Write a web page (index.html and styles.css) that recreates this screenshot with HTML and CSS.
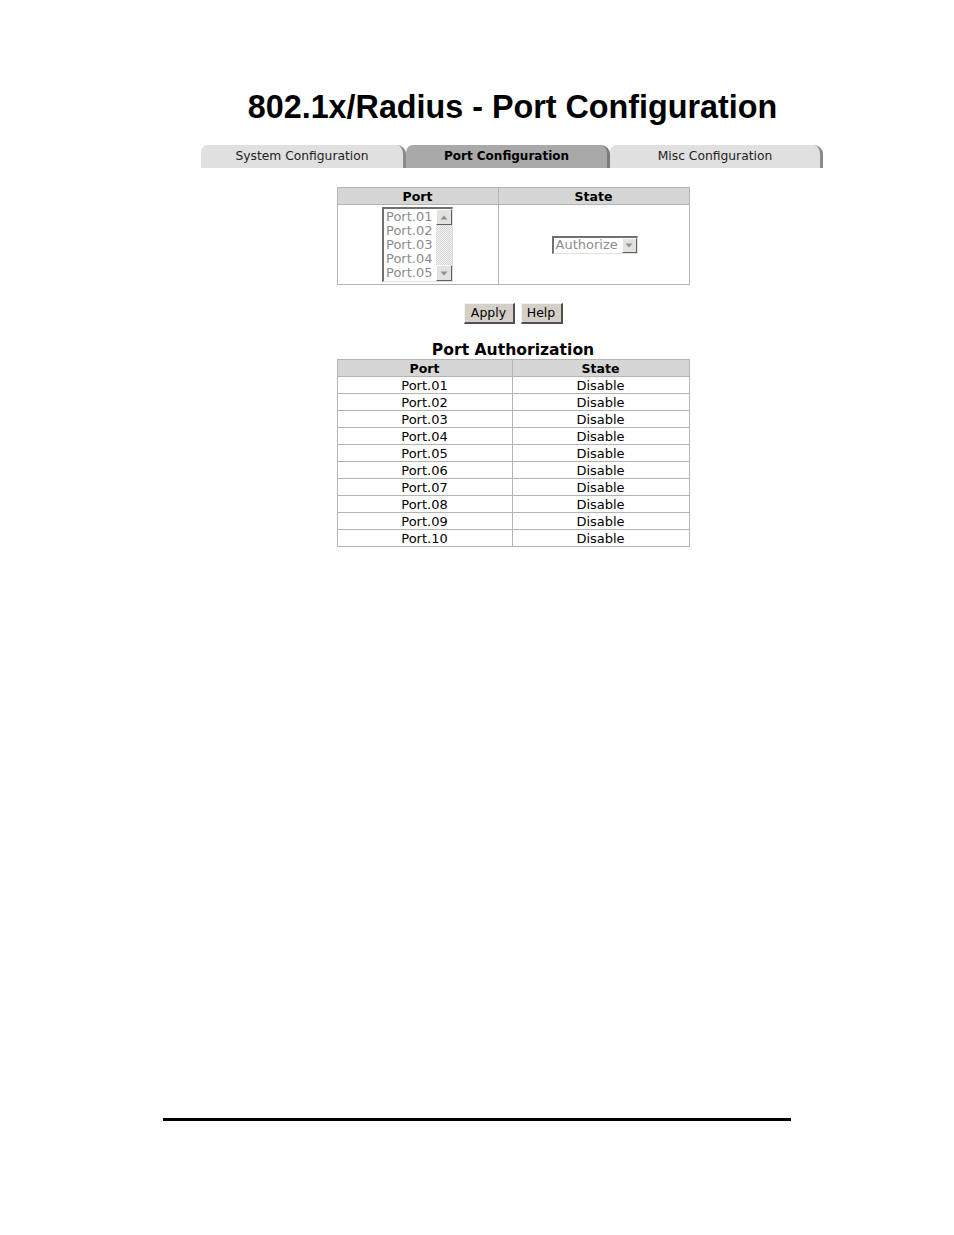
FILE: index.html
```html
<!DOCTYPE html>
<html>
<head>
<meta charset="utf-8">
<link rel="stylesheet" href="styles.css">
</head>
<body>
<div class="page">
  <h1 class="title">802.1x/Radius - Port Configuration</h1>
  <div class="tabs">
    <div class="tab tab1">System Configuration</div>
    <div class="tab tab2 active">Port Configuration</div>
    <div class="tab tab3">Misc Configuration</div>
  </div>

  <table class="cfg">
    <tr class="hdr"><th class="c1">Port</th><th>State</th></tr>
    <tr class="body">
      <td class="c1">
        <div class="listbox">
          <div class="items">
            <div>Port.01</div><div>Port.02</div><div>Port.03</div><div>Port.04</div><div>Port.05</div>
          </div>
          <div class="sbar">
            <div class="sbtn"><svg width="8" height="5" viewBox="0 0 8 5"><polygon points="4,0.5 7.5,4.5 0.5,4.5" fill="#909090"/></svg></div>
            <div class="track"></div>
            <div class="sbtn"><svg width="8" height="5" viewBox="0 0 8 5"><polygon points="0.5,0.5 7.5,0.5 4,4.5" fill="#909090"/></svg></div>
          </div>
        </div>
      </td>
      <td>
        <div class="select">
          <span class="sel-text">Authorize</span>
          <span class="sel-btn"><svg width="8" height="5" viewBox="0 0 8 5"><polygon points="0.5,0.5 7.5,0.5 4,4.5" fill="#909090"/></svg></span>
        </div>
      </td>
    </tr>
  </table>

  <div class="buttons">
    <span class="btn btn-apply">Apply</span>
    <span class="btn btn-help">Help</span>
  </div>

  <div class="subtitle">Port Authorization</div>
  <table class="auth">
    <tr class="hdr"><th class="a1">Port</th><th>State</th></tr>
    <tr><td class="a1">Port.01</td><td>Disable</td></tr>
    <tr><td class="a1">Port.02</td><td>Disable</td></tr>
    <tr><td class="a1">Port.03</td><td>Disable</td></tr>
    <tr><td class="a1">Port.04</td><td>Disable</td></tr>
    <tr><td class="a1">Port.05</td><td>Disable</td></tr>
    <tr><td class="a1">Port.06</td><td>Disable</td></tr>
    <tr><td class="a1">Port.07</td><td>Disable</td></tr>
    <tr><td class="a1">Port.08</td><td>Disable</td></tr>
    <tr><td class="a1">Port.09</td><td>Disable</td></tr>
    <tr><td class="a1">Port.10</td><td>Disable</td></tr>
  </table>
</div>
<div class="footer-line"></div>
</body>
</html>
```
FILE: styles.css
```css
html, body {
  margin: 0;
  padding: 0;
  background: #fff;
}
body {
  width: 954px;
  height: 1235px;
  position: relative;
  font-family: "DejaVu Sans", Verdana, sans-serif;
  color: #000;
}
.page {
  margin-left: 201px;
  width: 622px;
  padding-top: 89px;
}
.title {
  margin: 0;
  font-family: "Liberation Sans", Arial, sans-serif;
  font-weight: bold;
  font-size: 32.3px;
  line-height: 36px;
  text-align: center;
  padding-left: 1px;
}
.tabs {
  margin-top: 20px;
  display: flex;
  height: 23px;
}
.tab {
  height: 23px;
  box-sizing: border-box;
  font-size: 12.3px;
  line-height: 23px;
  text-align: center;
  color: #222;
  background: #e0e0e0;
  border-top-left-radius: 7px;
  border-top-right-radius: 9px;
  border-right: 3px solid #8a8a8a;
}
.tab1 { width: 205px; }
.tab2 { width: 204px; }
.tab3 { width: 213px; }
.tab.active {
  background: #a9a9a9;
  font-weight: bold;
  font-size: 12px;
  color: #000;
  border-right-color: #7a7a7a;
}
.cfg, .auth {
  border-collapse: collapse;
  margin-left: auto;
  margin-right: auto;
  width: 353px;
  font-size: 13px;
  position: relative;
  left: 1px;
}
.cfg {
  margin-top: 19px;
}
.cfg th, .auth th {
  background: #d6d6d6;
  font-weight: bold;
  font-size: 12.5px;
  height: 16px;
  line-height: 15px;
  padding: 0;
  border: 1px solid #b4b4b4;
}
.cfg td, .auth td {
  border: 1px solid #b4b4b4;
  padding: 0;
  text-align: center;
}
.cfg .c1 { width: 160px; }
.cfg .body td { height: 79px; vertical-align: middle; }
.listbox {
  width: 71px;
  height: 75px;
  box-sizing: border-box;
  margin: 0 auto;
  position: relative;
  left: 0px;
  display: flex;
  border-top: 2px solid #707070;
  border-left: 2px solid #707070;
  border-right: 1px solid #e0e0e0;
  border-bottom: 1px solid #e0e0e0;
  background: #fff;
}
.items {
  flex: 1;
  text-align: left;
  color: #8c8c8c;
  font-size: 13px;
  line-height: 14px;
  padding-left: 2px;
  padding-top: 1px;
  overflow: hidden;
  white-space: nowrap;
}
.sbar {
  width: 16px;
  flex: none;
  display: flex;
  flex-direction: column;
}
.sbtn {
  height: 16px;
  box-sizing: border-box;
  background: #e4e2de;
  border-top: 1px solid #fff;
  border-left: 1px solid #fff;
  border-right: 1px solid #606060;
  border-bottom: 1px solid #606060;
  display: flex;
  align-items: center;
  justify-content: center;
}
.track {
  flex: 1;
  background-color: #eeeeee;
  background-image: repeating-conic-gradient(#d4d4d4 0 25%, #f4f4f4 0 50%);
  background-size: 2px 2px;
}
.select {
  display: inline-flex;
  align-items: center;
  width: 86px;
  height: 18px;
  box-sizing: border-box;
  border-top: 2px solid #707070;
  border-left: 2px solid #707070;
  border-right: 1px solid #e0e0e0;
  border-bottom: 1px solid #e0e0e0;
  background: #fff;
  vertical-align: middle;
  position: relative;
  left: 1px;
}
.sel-text {
  flex: 1;
  text-align: left;
  color: #8c8c8c;
  font-size: 13px;
  line-height: 14px;
  padding-left: 2px;
  white-space: nowrap;
}
.sel-btn {
  width: 15px;
  height: 15px;
  flex: none;
  box-sizing: border-box;
  background: #e4e2de;
  border-top: 1px solid #fff;
  border-left: 1px solid #fff;
  border-right: 1px solid #606060;
  border-bottom: 1px solid #606060;
  display: flex;
  align-items: center;
  justify-content: center;
}
.buttons {
  margin-top: 18px;
  display: flex;
  justify-content: center;
  gap: 6px;
  padding-left: 2px;
}
.btn {
  display: inline-block;
  box-sizing: border-box;
  height: 21px;
  line-height: 18px;
  font-size: 12.5px;
  text-align: center;
  background: #d4d0c8;
  border-top: 1px solid #f4f4f4;
  border-left: 1px solid #f4f4f4;
  border-right: 2px solid #505050;
  border-bottom: 2px solid #505050;
}
.btn-apply { width: 51px; }
.btn-help { width: 42px; }
.subtitle {
  margin-top: 17px;
  text-align: center;
  font-weight: bold;
  font-size: 15.6px;
  line-height: 18px;
  padding-left: 2px;
}
.auth .a1 { width: 174px; }
.auth td {
  height: 16px;
  line-height: 15px;
}
.footer-line {
  position: absolute;
  left: 163px;
  top: 1118px;
  width: 628px;
  height: 3px;
  background: #000;
}
```
